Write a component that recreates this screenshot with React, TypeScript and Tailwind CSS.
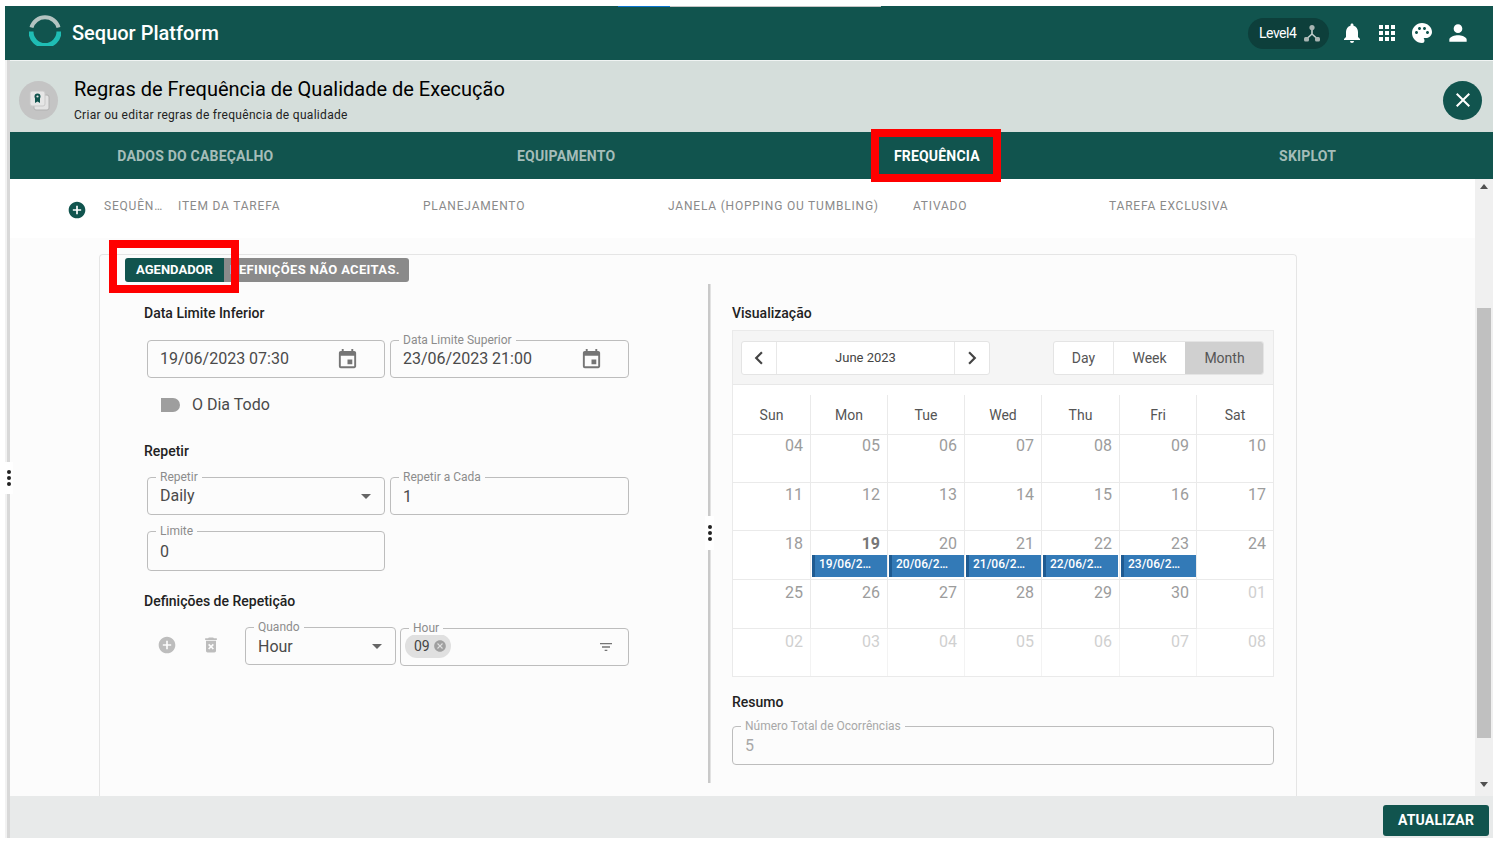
import React from "react";
import {
  MdAddCircle,
  MdApps,
  MdArrowDropDown,
  MdCancel,
  MdChevronLeft,
  MdChevronRight,
  MdClose,
  MdDeleteForever,
  MdEvent,
  MdFilterList,
  MdNotifications,
  MdPalette,
  MdPerson,
} from "react-icons/md";

const tabs = ["DADOS DO CABEÇALHO", "EQUIPAMENTO", "FREQUÊNCIA", "SKIPLOT"];
const weekdays = ["Sun", "Mon", "Tue", "Wed", "Thu", "Fri", "Sat"];

const days = [
  "04", "05", "06", "07", "08", "09", "10",
  "11", "12", "13", "14", "15", "16", "17",
  "18", "19", "20", "21", "22", "23", "24",
  "25", "26", "27", "28", "29", "30", "01",
  "02", "03", "04", "05", "06", "07", "08",
];

const events: Record<number, string> = {
  15: "19/06/2023",
  16: "20/06/2023",
  17: "21/06/2023",
  18: "22/06/2023",
  19: "23/06/2023",
};

// top padding of the day number, per calendar row
const rowPadding = ["pt-[1px]", "pt-[2px]", "pt-[3px]", "pt-[3px]", "pt-[3px]"];

const Field: React.FC<{
  label: string;
  className: string;
  disabled?: boolean;
  children: React.ReactNode;
}> = ({ label, className, disabled, children }) => (
  <div className={`relative flex items-center rounded-[4px] border border-[#bdbdbd] ${className}`}>
    <span
      className={`absolute -top-[8px] left-[8px] bg-[#fcfcfc] px-[4px] text-[12px] leading-[14px] ${
        disabled ? "text-[#a8a8a8]" : "text-[#8c8c8c]"
      }`}
    >
      {label}
    </span>
    {children}
  </div>
);

const Value: React.FC<{ children: React.ReactNode; className?: string }> = ({ children, className = "" }) => (
  <span className={`flex-1 pl-[12px] text-[16px] text-[#4a4a4a] ${className}`}>{children}</span>
);

const SectionLabel: React.FC<{ children: React.ReactNode; className?: string }> = ({
  children,
  className = "",
}) => <div className={`h-[20px] text-[14px] leading-[20px] font-medium text-[#222] ${className}`}>{children}</div>;

const Dots: React.FC = () => (
  <div className="flex flex-col items-center gap-[2px]">
    <span className="h-[4px] w-[4px] rounded-full bg-[#222]" />
    <span className="h-[4px] w-[4px] rounded-full bg-[#222]" />
    <span className="h-[4px] w-[4px] rounded-full bg-[#222]" />
  </div>
);

const RedBox: React.FC<{ className: string }> = ({ className }) => (
  <div className={`absolute z-10 border-[8px] border-[#ff0000] ${className}`} />
);

const Logo: React.FC = () => (
  <svg width="32" height="32" viewBox="0 0 32 32" fill="none" className="-mt-[6px] shrink-0">
    <path d="M2.5 13.5 A14 14 0 0 1 29.5 13.5" stroke="#b4c4c1" strokeWidth="4" />
    <path d="M2 17.5 A14 14 0 0 0 30 17.5" stroke="#1fbdb4" strokeWidth="5" />
  </svg>
);

const HubIcon: React.FC = () => (
  <svg width="18" height="18" viewBox="0 0 18 18" fill="none">
    <path d="M9 5 V10 L3.5 15 M9 10 L14.5 15" stroke="#c4d0ce" strokeWidth="1.6" />
    <circle cx="9" cy="3.5" r="2.6" fill="#a8b5b3" />
    <rect x="1" y="13" width="5" height="4.5" rx="1.5" fill="#a8b5b3" />
    <rect x="12" y="13" width="5" height="4.5" rx="1.5" fill="#a8b5b3" />
  </svg>
);

const RuleIcon: React.FC = () => (
  <svg width="22" height="22" viewBox="0 0 22 22" fill="none">
    <rect x="6" y="6" width="15" height="15" rx="2" fill="#e3e3e3" stroke="#b0b0b0" />
    <rect x="2" y="2" width="15" height="15" rx="2" fill="#e6e6e6" stroke="#c9c9c9" />
    <path d="M7 9 V14 L9.5 12.5 L12 14 V9 Z" fill="#11544e" />
    <circle cx="9.5" cy="7.5" r="3" fill="#11544e" />
    <circle cx="9.5" cy="7.5" r="1.1" fill="#e6e6e6" />
  </svg>
);

const Calendar: React.FC = () => (
  <div className="h-[347px] border border-[#eaeaea] bg-white">
    <div className="flex h-[54px] items-center justify-between border-b border-[#e8e8e8] bg-[#f5f5f5] pr-[9px] pl-[9px]">
      <div className="-ml-[1px] flex h-[34px] w-[249px] rounded-[3px] border border-[#e4e4e4] bg-white text-[#444]">
        <div className="flex w-[35px] items-center justify-center border-r border-[#e8e8e8]">
          <MdChevronLeft size={26} />
        </div>
        <div className="flex flex-1 items-center justify-center pt-[1px] text-[13px]">June 2023</div>
        <div className="flex w-[35px] items-center justify-center border-l border-[#e8e8e8]">
          <MdChevronRight size={26} />
        </div>
      </div>
      <div className="flex h-[34px] w-[211px] overflow-hidden rounded-[3px] border border-[#e4e4e4] bg-white text-[14px] text-[#555]">
        <div className="flex w-[60px] items-center justify-center border-r border-[#e8e8e8] pt-[1px]">Day</div>
        <div className="flex w-[71px] items-center justify-center pt-[1px]">Week</div>
        <div className="flex flex-1 items-center justify-center bg-[#d0d0d0] pt-[1px] pl-[1px]">Month</div>
      </div>
    </div>
    <div className="grid h-[50px] grid-cols-[78px_77px_77px_77px_78px_77px_1fr] border-b border-[#eaeaea] pt-[10px]">
      {weekdays.map((d, i) => (
        <div
          key={d}
          className={`flex items-center justify-center pt-[2px] text-[14px] text-[#555] ${
            i < 6 ? "border-r border-[#eaeaea]" : ""
          }`}
        >
          {d}
        </div>
      ))}
    </div>
    <div className="grid h-[241px] grid-cols-[78px_77px_77px_77px_78px_77px_1fr] grid-rows-[48px_48px_49px_49px_47px]">
      {days.map((d, i) => {
        const muted = i >= 27;
        return (
          <div
            key={i}
            className={`min-w-0 ${rowPadding[Math.floor(i / 7)]} ${i % 7 < 6 ? "border-r" : ""} ${
              i < 28 ? "border-b" : ""
            } ${muted ? "border-[#f3f3f3]" : "border-[#eaeaea]"}`}
          >
            <div
              className={`pr-[7px] text-right text-[16px] leading-[20px] ${
                i === 15 ? "font-bold text-[#777]" : muted ? "text-[#d0d0d0]" : "text-[#9c9c9c]"
              }`}
            >
              {d}
            </div>
            {events[i] && (
              <div className="mt-[1px] ml-[1px] h-[22px] w-[75px] truncate border-l-[3px] border-[#1f5b91] bg-[#337ab7] pr-[12px] pl-[4px] text-[12px] leading-[18px] font-medium text-white">
                {events[i]}
              </div>
            )}
          </div>
        );
      })}
    </div>
  </div>
);

const App: React.FC = () => (
  <div
    className="flex h-[844px] w-[1497px] flex-col overflow-hidden bg-white pt-[6px] pr-[4px] pb-[6px] pl-[5px]"
    style={{ fontFamily: "Roboto, sans-serif" }}
  >
    <header className="relative flex h-[54px] shrink-0 items-center bg-[#11544e] pr-[22px] pl-[24px]">
      <div className="absolute top-0 left-[613px] flex">
        <span className="h-[1px] w-[52px] bg-[#0a74d0]" />
        <span className="h-[1px] w-[211px] bg-[#c4c4c4]" />
      </div>
      <Logo />
      <div className="ml-[11px] text-[20px] font-medium text-white">Sequor Platform</div>
      <div className="ml-auto flex items-center text-white">
        <div className="flex h-[31px] w-[81px] items-center gap-[7px] rounded-full bg-[#0d3f3b] pl-[11px]">
          <span className="text-[14px] tracking-[-0.5px]">Level4</span>
          <HubIcon />
        </div>
        <MdNotifications size={24} className="ml-[11px]" />
        <MdApps size={24} className="ml-[11px]" />
        <MdPalette size={24} className="ml-[11px]" />
        <MdPerson size={26} className="ml-[11px]" />
      </div>
    </header>

    <div className="flex min-h-0 flex-1">
      <div className="relative flex w-[5px] shrink-0 justify-end bg-[#f2f2f2]">
        <div className="w-[3px] bg-[#d8d8d8]" />
        <div className="absolute top-[402px] left-0 z-10 flex h-[32px] w-[8px] items-center justify-center bg-white">
          <Dots />
        </div>
      </div>

      <div className="flex min-w-0 flex-1 flex-col">
        <div className="flex h-[72px] shrink-0 items-center border-t border-[#f0f4f3] bg-[#d5dedb] pt-[7px] pr-[11px] pl-[9px]">
          <div className="flex h-[39px] w-[39px] items-center justify-center rounded-full bg-[#c4c4c4]">
            <RuleIcon />
          </div>
          <div className="mt-[8px] ml-[16px] self-start">
            <div className="text-[20px] leading-[26px] text-black">Regras de Frequência de Qualidade de Execução</div>
            <div className="mt-[5px] text-[12px] leading-[16px] tracking-[0.3px] text-[#222]">
              Criar ou editar regras de frequência de qualidade
            </div>
          </div>
          <div className="ml-auto flex h-[39px] w-[39px] items-center justify-center rounded-full bg-[#11544e] text-white">
            <MdClose size={24} />
          </div>
        </div>

        <div className="grid h-[47px] shrink-0 grid-cols-4 bg-[#11544e]">
          {tabs.map((t) => (
            <div
              key={t}
              className={`relative flex items-center justify-center pt-[1px] text-[14px] font-bold tracking-[0.2px] ${
                t === "FREQUÊNCIA" ? "text-white" : "text-[#a5bdb9]"
              }`}
            >
              {t}
              {t === "FREQUÊNCIA" && (
                <RedBox className="-top-[3px] left-1/2 -ml-[1px] h-[53px] w-[130px] -translate-x-1/2" />
              )}
            </div>
          ))}
        </div>

        <div className="flex min-h-0 flex-1 overflow-hidden">
          <div className="min-w-0 flex-1 bg-[#fcfcfc]">
            <div className="grid h-[59px] grid-cols-[94px_74px_245px_245px_245px_196px_1fr] items-center bg-white pb-[6px] text-[12px] tracking-[0.8px] text-[#8a8a8a]">
              <div className="flex justify-end pt-[8px] pr-[17px] text-[#11544e]">
                <MdAddCircle size={20} />
              </div>
              <div>SEQUÊN…</div>
              <div>ITEM DA TAREFA</div>
              <div>PLANEJAMENTO</div>
              <div>JANELA (HOPPING OU TUMBLING)</div>
              <div>ATIVADO</div>
              <div>TAREFA EXCLUSIVA</div>
            </div>

            <div className="relative mt-[16px] ml-[89px] h-[560px] w-[1198px] rounded-t-[4px] border border-b-0 border-[#e5e5e5] bg-[#fcfcfc] pt-[3px]">
              <RedBox className="-top-[15px] left-[9px] h-[53px] w-[130px]" />
              <div className="ml-[25px] flex h-[24px] w-[284px] overflow-hidden rounded-[3px] text-[13px] leading-[23px] font-bold text-white">
                <div className="w-[99px] bg-[#11544e] text-center">AGENDADOR</div>
                <div className="flex-1 bg-[#8a8a8a] pr-[3px] text-center tracking-[0.35px] whitespace-nowrap">
                  DEFINIÇÕES NÃO ACEITAS.
                </div>
              </div>

              <div className="mt-[2px] flex">
                <div className="w-[608px] pt-[19px] pl-[44px]">
                  <SectionLabel>Data Limite Inferior</SectionLabel>
                  <div className="mt-[17px] ml-[3px] flex gap-[5px]">
                    <div className="flex h-[38px] w-[238px] items-center rounded-[4px] border border-[#bdbdbd]">
                      <Value>19/06/2023 07:30</Value>
                      <MdEvent size={23} className="mr-[25px] text-[#757575]" />
                    </div>
                    <Field label="Data Limite Superior" className="h-[38px] w-[239px]">
                      <Value>23/06/2023 21:00</Value>
                      <MdEvent size={23} className="mr-[25px] text-[#757575]" />
                    </Field>
                  </div>

                  <div className="mt-[17px] ml-[17px] flex h-[20px] items-center">
                    <span className="h-[14px] w-[19px] rounded-l-[4px] rounded-r-full bg-[#9e9e9e]" />
                    <span className="ml-[12px] text-[16px] text-[#4a4a4a]">O Dia Todo</span>
                  </div>

                  <SectionLabel className="mt-[26px]">Repetir</SectionLabel>
                  <div className="mt-[16px] ml-[3px] flex gap-[5px]">
                    <Field label="Repetir" className="h-[38px] w-[238px]">
                      <Value>Daily</Value>
                      <MdArrowDropDown size={24} className="mr-[6px] text-[#666]" />
                    </Field>
                    <Field label="Repetir a Cada" className="h-[38px] w-[239px]">
                      <Value className="pt-[1px]">1</Value>
                    </Field>
                  </div>
                  <Field label="Limite" className="mt-[16px] ml-[3px] h-[40px] w-[238px]">
                    <Value className="pt-[1px]">0</Value>
                  </Field>

                  <SectionLabel className="mt-[20px]">Definições de Repetição</SectionLabel>
                  <div className="mt-[16px] flex">
                    <div className="flex h-[36px] w-[101px] items-center pl-[13px] text-[#bdbdbd]">
                      <MdAddCircle size={20} />
                      <MdDeleteForever size={20} className="ml-[24px]" />
                    </div>
                    <Field label="Quando" className="h-[38px] w-[151px]">
                      <Value className="pt-[1px]">Hour</Value>
                      <MdArrowDropDown size={24} className="mr-[6px] text-[#666]" />
                    </Field>
                    <Field label="Hour" className="mt-[1px] ml-[4px] h-[38px] w-[229px]">
                      <div className="-mt-[2px] ml-[4px] flex h-[24px] w-[46px] items-center rounded-full bg-[#e0e0e0] pl-[9px] text-[14px] text-[#444]">
                        09
                        <MdCancel size={14} className="ml-[3px] text-[#a0a0a0]" />
                      </div>
                      <MdFilterList size={16} className="mr-[14px] ml-auto text-[#757575]" />
                    </Field>
                  </div>
                </div>

                <div className="relative h-[499px] w-[3px] border-r border-[#e2e2e2] bg-[#c9c9c9]">
                  <div className="absolute top-[232px] -left-[3px] flex h-[34px] w-[9px] items-center justify-center bg-white">
                    <Dots />
                  </div>
                </div>

                <div className="w-[563px] pt-[19px] pl-[21px]">
                  <SectionLabel>Visualização</SectionLabel>
                  <div className="mt-[7px]">
                    <Calendar />
                  </div>
                  <SectionLabel className="mt-[15px]">Resumo</SectionLabel>
                  <Field label="Número Total de Ocorrências" disabled className="mt-[14px] h-[39px] w-[542px]">
                    <span className="pl-[12px] text-[16px] text-[#a8a8a8]">5</span>
                  </Field>
                </div>
              </div>
            </div>
          </div>

          <div className="flex w-[18px] shrink-0 flex-col items-center bg-[#f0f0f0]">
            <div className="mt-[5px] h-0 w-0 border-x-[4px] border-b-[5px] border-x-transparent border-b-[#505050]" />
            <div className="mt-[119px] h-[430px] w-[14px] bg-[#c0c0c0]" />
            <div className="mt-[44px] h-0 w-0 border-x-[4px] border-t-[5px] border-x-transparent border-t-[#505050]" />
          </div>
        </div>

        <div className="flex h-[42px] shrink-0 items-end justify-end bg-[#e8eaea] pr-[4px] pb-[2px]">
          <button className="h-[31px] w-[106px] rounded-[3px] bg-[#11544e] text-[14px] font-bold tracking-[0.2px] text-white">
            ATUALIZAR
          </button>
        </div>
      </div>
    </div>
  </div>
);

export default App;
